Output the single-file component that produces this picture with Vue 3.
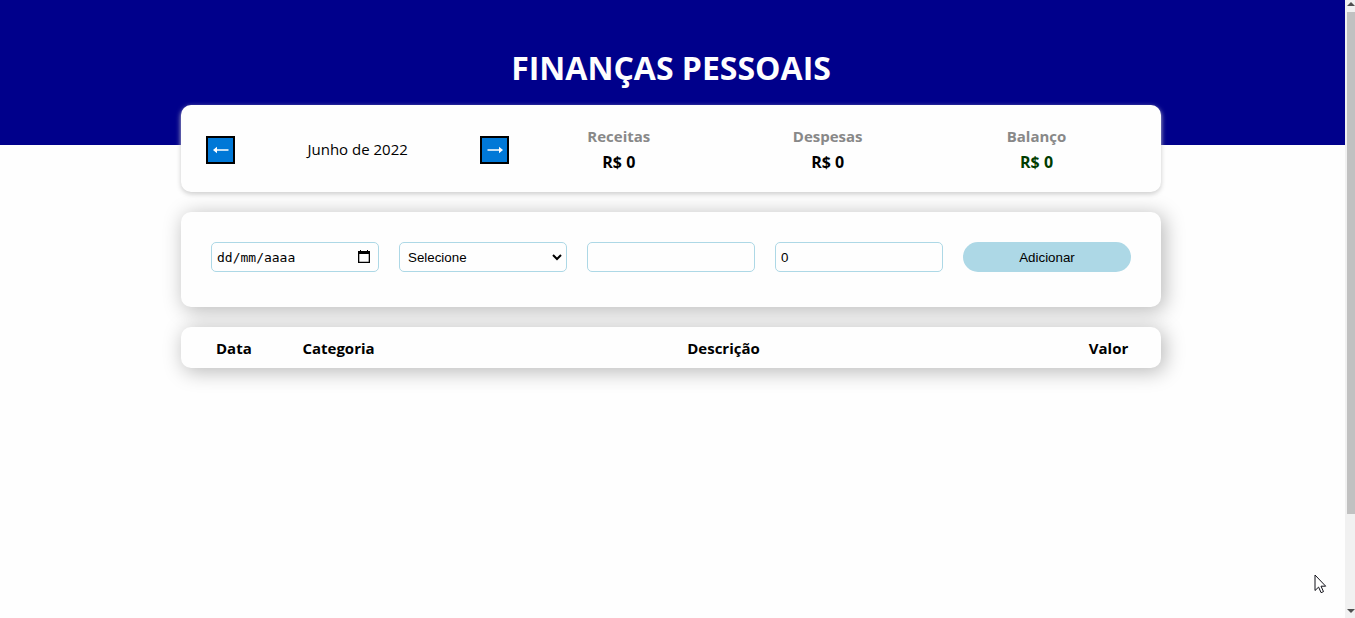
<script setup>
import { ref } from 'vue'

const month = ref('Junho de 2022')
const date = ref('')
const category = ref('')
const title = ref('')
const amount = ref(0)
const totals = [
  { label: 'Receitas', value: 'R$ 0' },
  { label: 'Despesas', value: 'R$ 0' },
  { label: 'Balanço', value: 'R$ 0', positive: true },
]
const columns = [
  { label: 'Data', cls: 'col-date' },
  { label: 'Categoria', cls: 'col-category' },
  { label: 'Descrição', cls: 'col-title' },
  { label: 'Valor', cls: 'col-value' },
]
</script>

<template>
  <div class="page">
    <div class="content">
      <header class="header">
        <h1>FINANÇAS PESSOAIS</h1>
      </header>

      <main class="body">
        <section class="card summary">
          <div class="month">
            <button class="arrow" type="button" aria-label="Mês anterior">
              <svg width="16" height="8" viewBox="0 0 16 8" aria-hidden="true">
                <path class="shaft" d="M2 4h13.500" />
                <path class="head" d="M0 4l4-3.200v6.400z" />
              </svg>
            </button>
            <span class="month-title">{{ month }}</span>
            <button class="arrow" type="button" aria-label="Próximo mês">
              <svg width="16" height="8" viewBox="0 0 16 8" aria-hidden="true">
                <path class="shaft" d="M.5 4H14" />
                <path class="head" d="M16 4l-4-3.200v6.400z" />
              </svg>
            </button>
          </div>
          <div class="totals">
            <div v-for="t in totals" :key="t.label" class="total">
              <div class="total-label">{{ t.label }}</div>
              <div class="total-value" :class="{ positive: t.positive }">{{ t.value }}</div>
            </div>
          </div>
        </section>

        <form class="card entry" @submit.prevent>
          <div class="date-field">
            <input v-model="date" class="field date" type="text" placeholder="dd/mm/aaaa" aria-label="Data" />
            <svg class="calendar" width="12" height="13" viewBox="0 0 12 13" aria-hidden="true">
              <path d="M0 1h2V0h1v1h6V0h1v1h2v12H0zM1.300 4v7.700h9.400V4z" fill-rule="evenodd" />
            </svg>
          </div>
          <div class="select-field">
            <select v-model="category" class="field select" aria-label="Categoria">
              <option value="">Selecione</option>
              <option value="food">Alimentação</option>
              <option value="rent">Aluguel</option>
              <option value="salary">Salário</option>
            </select>
            <svg class="chevron" width="10" height="7" viewBox="0 0 10 7" aria-hidden="true">
              <path d="M1 1l4 4 4-4" />
            </svg>
          </div>
          <input v-model="title" class="field" type="text" aria-label="Descrição" />
          <input v-model="amount" class="field" type="number" aria-label="Valor" />
          <button class="add" type="submit">Adicionar</button>
        </form>

        <section class="card list">
          <table>
            <thead>
              <tr>
                <th v-for="c in columns" :key="c.label" :class="c.cls" scope="col">{{ c.label }}</th>
              </tr>
            </thead>
          </table>
        </section>
      </main>
    </div>

    <div class="scrollbar" aria-hidden="true">
      <svg class="scroll-arrow" width="8" height="4" viewBox="0 0 8 4"><path d="M0 4l4-4 4 4z" /></svg>
      <div class="track"><div class="thumb"></div></div>
      <svg class="scroll-arrow" width="8" height="4" viewBox="0 0 8 4"><path d="M0 0h8L4 4z" /></svg>
    </div>

    <svg class="pointer" width="13" height="20" viewBox="0 0 13 20" aria-hidden="true">
      <path d="M1 1v15.500l3.600-3.400 2.500 5.600 2.400-1.100L7 12.200h4.700z" />
    </svg>
  </div>
</template>

<style>
body {
  margin: 0;
  background: #fefefe;
}
</style>

<style scoped>
* {
  box-sizing: border-box;
}
.page {
  display: grid;
  grid-template-columns: minmax(0, 1fr) 10px;
  min-height: 100vh;
  font-family: "Segoe UI", "Open Sans", "Noto Sans", sans-serif;
  font-size: 15px;
  line-height: 21px;
  color: #000;
}
.header {
  height: 145px;
  padding: 46px 3px 0 0;
  background: darkblue;
  text-align: center;
}
h1 {
  margin: 0;
  font-size: 32px;
  line-height: 44px;
  font-weight: 700;
  color: #fefefe;
}
.body {
  max-width: 983px;
  margin: -40px auto 50px;
  padding-right: 3px;
}
.card {
  margin-bottom: 20px;
  border-radius: 10px;
  background: #fefefe;
  box-shadow: 3px 3px 20px 1px rgba(0, 0, 0, 0.27);
}
.summary {
  display: grid;
  grid-template-columns: minmax(0, 1fr) minmax(0, 2fr);
  align-items: center;
  padding: 21px 20px 19px;
  box-shadow: 0 2px 5px #ccc;
}
.month {
  display: flex;
  align-items: center;
  padding: 0 5px;
}
.month-title {
  flex: 1;
  text-align: center;
}
.arrow {
  display: flex;
  align-items: center;
  justify-content: center;
  width: 29px;
  height: 28px;
  padding: 0;
  border: 2px solid #000;
  background: #0078d7;
}
.shaft {
  fill: none;
  stroke: #fff;
  stroke-width: 1.5;
}
.head {
  fill: #fff;
}
.totals {
  display: flex;
}
.total {
  flex: 1;
  text-align: center;
  font-weight: 700;
}
.total-label {
  margin-bottom: 5px;
  color: #888;
}
.total-value {
  font-size: 16px;
}
.positive {
  color: #003c00;
}
.entry {
  display: grid;
  grid-template-columns: repeat(5, minmax(0, 1fr));
  gap: 20px;
  padding: 30px 30px 35px;
}
.field,
.add {
  display: block;
  width: 100%;
  height: 30px;
  font-family: "Liberation Sans", Arial, sans-serif;
  color: #000;
}
.field {
  padding: 0 5px;
  border: 1px solid lightblue;
  border-radius: 5px;
  background: #fefefe;
  outline: none;
}
.date-field,
.select-field {
  position: relative;
}
.date {
  padding-right: 28px;
  font-family: "DejaVu Sans Mono", monospace;
  font-size: 13px;
}
.date::placeholder {
  color: #000;
  opacity: 1;
}
.calendar {
  position: absolute;
  top: 8px;
  right: 9px;
}
.select {
  appearance: none;
  padding: 0 20px 0 8px;
}
.chevron {
  position: absolute;
  top: 12px;
  right: 5px;
  fill: none;
  stroke: #000;
  stroke-width: 2;
  pointer-events: none;
}
.add {
  padding: 0;
  border: 0;
  border-radius: 15px;
  background: lightblue;
}
.list {
  padding: 11px 15px 9px;
}
table {
  width: 100%;
  table-layout: fixed;
  border-collapse: collapse;
}
th {
  padding: 0;
  text-align: center;
  font-weight: 700;
  white-space: nowrap;
}
.col-date {
  width: 105px;
  padding-left: 20px;
  text-align: left;
}
.col-category,
.col-value {
  width: 75px;
}
.scrollbar {
  display: flex;
  flex-direction: column;
  align-items: flex-end;
  gap: 6px;
  padding: 2px 0 5px;
  background: #f1f1f1;
}
.scroll-arrow {
  fill: #505050;
}
.track {
  flex: 1;
  width: 8px;
}
.thumb {
  height: 85%;
  background: #c1c1c1;
}
.pointer {
  position: fixed;
  right: 28px;
  bottom: 24px;
  fill: #fff;
  stroke: #101018;
  stroke-width: 1;
  pointer-events: none;
}
</style>
